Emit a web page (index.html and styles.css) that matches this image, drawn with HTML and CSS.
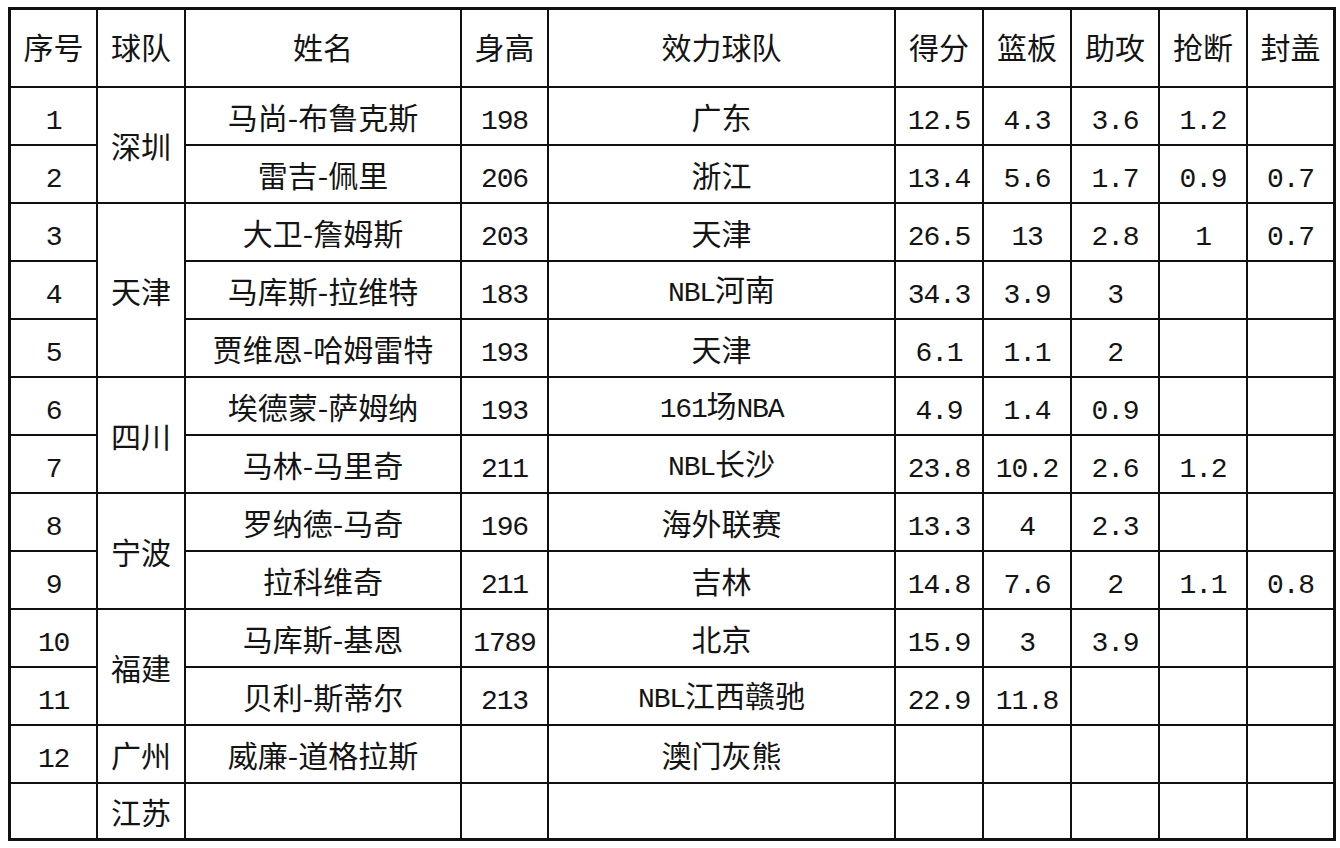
FILE: index.html
```html
<!DOCTYPE html>
<html lang="zh-CN">
<head>
<meta charset="utf-8">
<title>球员数据</title>
<link rel="stylesheet" href="styles.css">
</head>
<body>
<table class="sheet">
  <colgroup>
    <col class="c-no"><col class="c-team"><col class="c-name"><col class="c-h"><col class="c-club">
    <col class="c-s"><col class="c-s"><col class="c-s"><col class="c-s"><col class="c-last">
  </colgroup>
  <thead>
    <tr class="head">
      <th>序号</th><th>球队</th><th>姓名</th><th>身高</th><th>效力球队</th><th>得分</th><th>篮板</th><th>助攻</th><th>抢断</th><th>封盖</th>
    </tr>
  </thead>
  <tbody>
    <tr><td class="n">1</td><td rowspan="2">深圳</td><td>马尚-布鲁克斯</td><td class="n">198</td><td>广东</td><td class="n">12.5</td><td class="n">4.3</td><td class="n">3.6</td><td class="n">1.2</td><td class="n"></td></tr>
    <tr><td class="n">2</td><td>雷吉-佩里</td><td class="n">206</td><td>浙江</td><td class="n">13.4</td><td class="n">5.6</td><td class="n">1.7</td><td class="n">0.9</td><td class="n">0.7</td></tr>
    <tr><td class="n">3</td><td rowspan="3">天津</td><td>大卫-詹姆斯</td><td class="n">203</td><td>天津</td><td class="n">26.5</td><td class="n">13</td><td class="n">2.8</td><td class="n">1</td><td class="n">0.7</td></tr>
    <tr><td class="n">4</td><td>马库斯-拉维特</td><td class="n">183</td><td><span class="lat">NBL</span>河南</td><td class="n">34.3</td><td class="n">3.9</td><td class="n">3</td><td></td><td></td></tr>
    <tr><td class="n">5</td><td>贾维恩-哈姆雷特</td><td class="n">193</td><td>天津</td><td class="n">6.1</td><td class="n">1.1</td><td class="n">2</td><td></td><td></td></tr>
    <tr><td class="n">6</td><td rowspan="2">四川</td><td>埃德蒙-萨姆纳</td><td class="n">193</td><td><span class="lat">161</span>场<span class="lat">NBA</span></td><td class="n">4.9</td><td class="n">1.4</td><td class="n">0.9</td><td></td><td></td></tr>
    <tr><td class="n">7</td><td>马林-马里奇</td><td class="n">211</td><td><span class="lat">NBL</span>长沙</td><td class="n">23.8</td><td class="n">10.2</td><td class="n">2.6</td><td class="n">1.2</td><td></td></tr>
    <tr><td class="n">8</td><td rowspan="2">宁波</td><td>罗纳德-马奇</td><td class="n">196</td><td>海外联赛</td><td class="n">13.3</td><td class="n">4</td><td class="n">2.3</td><td></td><td></td></tr>
    <tr><td class="n">9</td><td>拉科维奇</td><td class="n">211</td><td>吉林</td><td class="n">14.8</td><td class="n">7.6</td><td class="n">2</td><td class="n">1.1</td><td class="n">0.8</td></tr>
    <tr><td class="n">10</td><td rowspan="2">福建</td><td>马库斯-基恩</td><td class="n">1789</td><td>北京</td><td class="n">15.9</td><td class="n">3</td><td class="n">3.9</td><td></td><td></td></tr>
    <tr><td class="n">11</td><td>贝利-斯蒂尔</td><td class="n">213</td><td><span class="lat">NBL</span>江西赣驰</td><td class="n">22.9</td><td class="n">11.8</td><td></td><td></td><td></td></tr>
    <tr><td class="n">12</td><td>广州</td><td>威廉-道格拉斯</td><td></td><td>澳门灰熊</td><td></td><td></td><td></td><td></td><td></td></tr>
    <tr class="last"><td></td><td>江苏</td><td></td><td></td><td></td><td></td><td></td><td></td><td></td><td></td></tr>
  </tbody>
</table>
</body>
</html>
```

FILE: styles.css
```css
html, body {
  margin: 0;
  padding: 0;
  background: #ffffff;
}

body {
  padding: 7px 0 0 8px;
  font-family: "Noto Sans CJK SC", "Noto Sans", sans-serif;
  color: #141414;
}

.sheet {
  border-collapse: separate;
  border-spacing: 0;
  table-layout: fixed;
  width: 1328px;
  border: 3px solid #111;
  font-size: 30px;
  line-height: 1;
}

.c-no { width: 87px; }
.c-team { width: 88px; }
.c-name { width: 276px; }
.c-h { width: 87px; }
.c-club { width: 347px; }
.c-s { width: 88px; }
.c-last { width: 85px; }

.sheet th,
.sheet td {
  box-sizing: border-box;
  padding: 0;
  text-align: center;
  vertical-align: middle;
  font-weight: 400;
  border-right: 2px solid #111;
  border-bottom: 2px solid #111;
  height: 58px;
  white-space: nowrap;
  overflow: hidden;
}

.sheet th:last-child,
.sheet td:last-child {
  border-right: none;
}

.sheet .head th {
  height: 78px;
  padding-bottom: 4px;
}

.sheet tr.last td {
  border-bottom: none;
  height: 54px;
}

.sheet td.n,
.lat {
  font-family: "Liberation Mono", "DejaVu Sans Mono", monospace;
  font-size: 28px;
  letter-spacing: -1.2px;
}

.sheet td.n {
  padding-top: 12px;
}
```
